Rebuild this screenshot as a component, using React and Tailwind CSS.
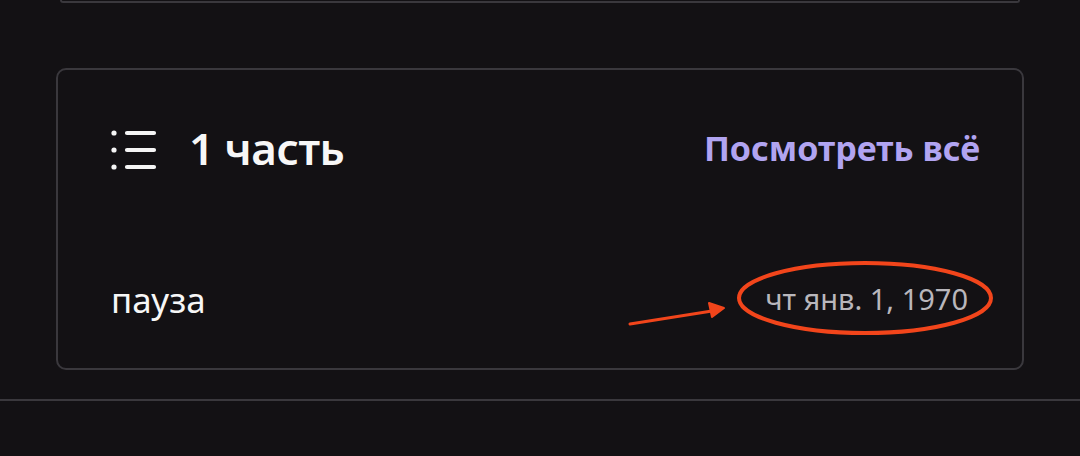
import React from "react";

const ListIcon = () => (
  <svg width="46" height="42" viewBox="0 0 46 42" fill="none" className="shrink-0 mt-[4px]">
    <circle cx="3" cy="4" r="2.6" fill="#f5f5f5" />
    <circle cx="3" cy="21" r="2.6" fill="#f5f5f5" />
    <circle cx="3" cy="38" r="2.6" fill="#f5f5f5" />
    <path d="M16 4h27M16 21h27M16 38h27" stroke="#f5f5f5" strokeWidth="4.2" strokeLinecap="round" />
  </svg>
);

const Annotation = () => (
  <svg className="absolute left-0 top-0 pointer-events-none" width="1080" height="456">
    <ellipse cx="865" cy="298" rx="126" ry="35" fill="none" stroke="#f2451b" strokeWidth="4" />
    <path d="M630 324 L712 311" stroke="#f2451b" strokeWidth="3" strokeLinecap="round" />
    <path d="M724 308 L709 303 L712 317 Z" fill="#f2451b" stroke="#f2451b" strokeWidth="2" strokeLinejoin="round" />
  </svg>
);

export default function App() {
  return (
    <div
      className="relative w-[1080px] h-[456px] overflow-hidden bg-[#131114]"
      style={{ fontFamily: '"Noto Sans", "Open Sans", sans-serif' }}
    >
      <div className="mx-[60px] h-[3px] border-x-2 border-b-2 border-[#3a383d] rounded-b-[8px]" />

      <div className="mx-[56px] mt-[65px] h-[302px] border-2 border-[#3a383d] rounded-[10px] flex flex-col">
        <div className="flex items-center justify-between pl-[53px] pr-[42px] pt-[55px]">
          <div className="flex items-center gap-[32px]">
            <ListIcon />
            <span className="text-[44px] leading-none font-semibold text-[#f7f7f7] tracking-[-0.5px]">1 часть</span>
          </div>
          <a className="text-[34px] leading-none font-bold text-[#b1a4f1]">Посмотреть всё</a>
        </div>

        <div className="flex items-center justify-between pl-[53px] pr-[54px] mt-[108px]">
          <span className="mt-[3px] text-[35px] leading-none text-[#f7f7f7]">пауза</span>
          <span className="text-[29px] leading-none text-[#b9b7bc]">чт янв. 1, 1970</span>
        </div>
      </div>

      <div className="mt-[29px] h-[2px] bg-[#3a383d]" />

      <Annotation />
    </div>
  );
}
